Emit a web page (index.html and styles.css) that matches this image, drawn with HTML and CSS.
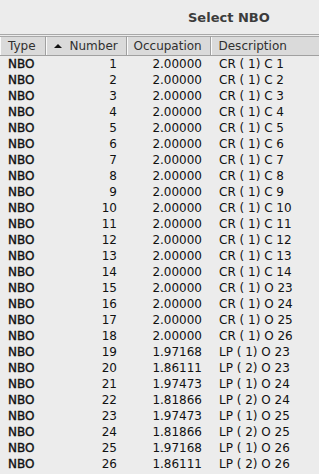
FILE: index.html
```html
<!DOCTYPE html>
<html lang="en">
<head>
  <meta charset="UTF-8" />
  <title>Select NBO</title>
  <link rel="stylesheet" href="styles.css">
</head>
<body>

  <!-- DIALOG TITLE -->
  <div class="titlebar">
    <span class="title">Select NBO</span>
  </div>

  <!-- NBO TABLE -->
  <table class="nbo-table">
    <colgroup>
      <col class="col-type">
      <col class="col-number">
      <col class="col-occ">
      <col class="col-desc">
    </colgroup>
    <thead>
      <tr>
        <th class="h-type">Type</th>
        <th class="h-number"><span class="sort-arrow"></span>Number</th>
        <th class="h-occ">Occupation</th>
        <th class="h-desc">Description</th>
      </tr>
    </thead>
    <tbody id="rows"></tbody>
  </table>

  <script>
    // rows of the NBO list
    const rows = [
      [1, '2.00000', 'CR ( 1) C 1'],
      [2, '2.00000', 'CR ( 1) C 2'],
      [3, '2.00000', 'CR ( 1) C 3'],
      [4, '2.00000', 'CR ( 1) C 4'],
      [5, '2.00000', 'CR ( 1) C 5'],
      [6, '2.00000', 'CR ( 1) C 6'],
      [7, '2.00000', 'CR ( 1) C 7'],
      [8, '2.00000', 'CR ( 1) C 8'],
      [9, '2.00000', 'CR ( 1) C 9'],
      [10, '2.00000', 'CR ( 1) C 10'],
      [11, '2.00000', 'CR ( 1) C 11'],
      [12, '2.00000', 'CR ( 1) C 12'],
      [13, '2.00000', 'CR ( 1) C 13'],
      [14, '2.00000', 'CR ( 1) C 14'],
      [15, '2.00000', 'CR ( 1) O 23'],
      [16, '2.00000', 'CR ( 1) O 24'],
      [17, '2.00000', 'CR ( 1) O 25'],
      [18, '2.00000', 'CR ( 1) O 26'],
      [19, '1.97168', 'LP ( 1) O 23'],
      [20, '1.86111', 'LP ( 2) O 23'],
      [21, '1.97473', 'LP ( 1) O 24'],
      [22, '1.81866', 'LP ( 2) O 24'],
      [23, '1.97473', 'LP ( 1) O 25'],
      [24, '1.81866', 'LP ( 2) O 25'],
      [25, '1.97168', 'LP ( 1) O 26'],
      [26, '1.86111', 'LP ( 2) O 26']
    ];

    const tbody = document.getElementById('rows');
    rows.forEach((r) => {
      const tr = document.createElement('tr');
      tr.innerHTML =
        '<td class="c-type">NBO</td>' +
        '<td class="c-number">' + r[0] + '</td>' +
        '<td class="c-occ">' + r[1] + '</td>' +
        '<td class="c-desc">' + r[2] + '</td>';
      tbody.appendChild(tr);
    });
  </script>

</body>
</html>
```

FILE: styles.css
```css
/* ------------------------------
   GENERAL
-------------------------------*/
body {
  margin: 0;
  padding: 0;
  background: #ececec;
  font-family: "DejaVu Sans", sans-serif;
  font-size: 12px;
  color: #111;
  overflow: hidden;
}

/* ---------------
   TITLE BAR
   ---------------*/
.titlebar {
  height: 35px;
  display: flex;
  align-items: center;
  padding-left: 188px;
  box-sizing: border-box;
  border-bottom: 1px solid #a8a8a8;
}
.title {
  font-weight: bold;
  font-size: 13px;
  color: #3c3c3c;
}

/* ---------------
   TABLE
   ---------------*/
.nbo-table {
  width: 319px;
  table-layout: fixed;
  border-collapse: collapse;
  margin-top: 1px;
  border-top: 1px solid #a8a8a8;
}
.col-type { width: 45px; }
.col-number { width: 81px; }
.col-occ { width: 84px; }
.col-desc { width: 109px; }

.nbo-table th {
  height: 18px;
  padding: 0;
  background: #dadada;
  font-weight: normal;
  color: #303030;
  text-align: left;
  white-space: nowrap;
  border-bottom: 1px solid #a0a0a0;
  border-right: 1px solid #a0a0a0;
  box-shadow: inset 1px 0 0 #fafafa;
}
.nbo-table th:last-child { border-right: none; }
.h-type { padding-left: 8px !important; }
.h-number { padding-left: 8px !important; }
.h-occ { padding-left: 7px !important; }
.h-desc { padding-left: 8px !important; }

.sort-arrow {
  display: inline-block;
  width: 0;
  height: 0;
  border-left: 4px solid transparent;
  border-right: 4px solid transparent;
  border-bottom: 4px solid #111;
  margin-right: 8px;
  vertical-align: 2px;
}

.nbo-table td {
  height: 16px;
  padding: 0;
  line-height: 16px;
  white-space: nowrap;
}
.c-type {
  padding-left: 8px !important;
  -webkit-text-stroke: 0.4px #111;
}
.c-number {
  text-align: right;
  padding-right: 9px !important;
}
.c-occ {
  text-align: right;
  padding-right: 8px !important;
}
.c-desc {
  padding-left: 9px !important;
}
```
